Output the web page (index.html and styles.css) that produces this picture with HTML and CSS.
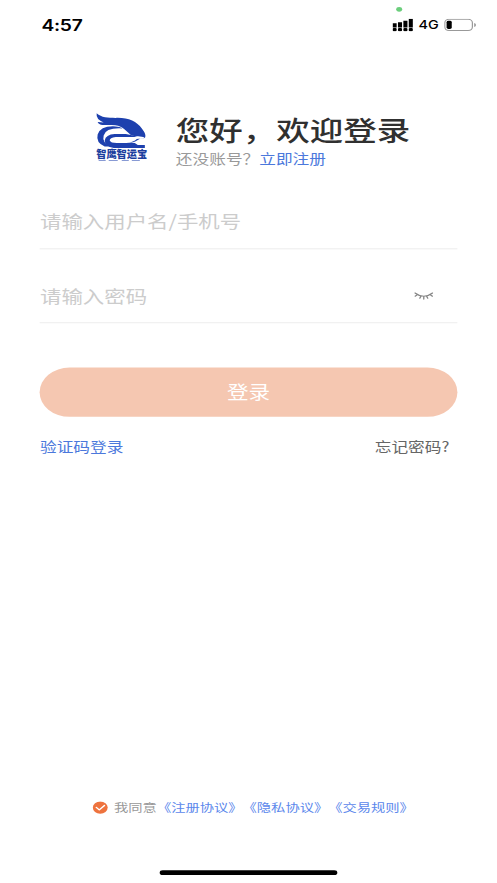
FILE: index.html
```html
<!DOCTYPE html>
<html lang="zh-CN">
<head>
<meta charset="utf-8">
<title>登录</title>
<link rel="stylesheet" href="styles.css">
</head>
<body>
<div class="screen">
  <header class="status">
    <span class="time">4:57</span>
    <div class="indicators">
      <i class="privacy-dot"></i>
      <svg class="signal" width="17" height="13" viewBox="0 0 17 13">
        <path d="M0 4.500h3.400v4.300H0zM4.500 3.500h3.400v5.300H4.500zM9 2h3.400v6.800H9zM13.500 0h3.400v8.800h-3.400z"/>
        <rect x="0" y="9.500" width="3.400" height="3.300" rx="1"/><rect x="4.500" y="9.500" width="3.400" height="3.300" rx="1"/><rect x="9" y="9.500" width="3.400" height="3.300" rx="1"/><rect x="13.500" y="9.500" width="3.400" height="3.300" rx="1"/>
      </svg>
      <span class="network">4G</span>
      <svg class="battery" width="27" height="13" viewBox="0 0 27 13">
        <rect x=".5" y=".5" width="23" height="11.500" rx="3.500" fill="none" stroke="#999"/>
        <rect x="2" y="2" width="4.300" height="8.500" rx="1.500"/>
        <path d="M25 4.300q1.500.500 1.500 2t-1.500 2z" fill="#999"/>
      </svg>
    </div>
  </header>

  <section class="intro">
    <svg class="logo" width="46" height="51" viewBox="0 0 55 50" preserveAspectRatio="none">
      <g fill="#1d40ae">
        <path d="M3 1C8 5.500 14 5.500 22 5.500C34 5 43 9 48 16C51 20 52.500 23 51 25.500C47 22.500 42 25 37 22.500C31 17 28 12.500 18 12.500H9Q5 12 4 9.500L10 10Q2 7 3 1Z"/>
        <path d="M29 16Q12 15 10 23Q8 30 17 34H11Q2 30 4 22Q7 13 22 14Q26 14 29 16Z"/>
        <path d="M51 25.500Q47 25 44 27.500Q40 30.500 34 30.500H41L44 32.500H51V35.500H20Q11 34 11 28Q12 22 21 21.500H32L37 22.500L44 24.500H22Q16 25 16 28Q17 30.500 23 30.500H33Q40 29.500 43 26.500Z"/>
        <path opacity=".7" d="M5 47.500h7v.700H5zM15 47.500h9v.700h-9zM28 47.500h7v.700h-7zM38 47.500h8v.700h-8z"/>
      </g>
      <text class="logo-name" x="2.500" y="45.600" textLength="51" lengthAdjust="spacingAndGlyphs">智鹰智运宝</text>
    </svg>
    <div class="greeting">
      <h1>您好，欢迎登录</h1>
      <p>还没账号？<a>立即注册</a></p>
    </div>
  </section>

  <main class="form">
    <div class="field">请输入用户名/手机号</div>
    <div class="field password">请输入密码
      <svg class="eye" width="16" height="9" viewBox="0 0 16 9" fill="none" stroke="#858585" stroke-width="1.100" stroke-linecap="round">
        <path d="M.700 1.300Q8 8 15.300 1.300M2.800 3L.800 4.600M5.600 4.600L4.700 6.700M8 5V7.500M10.400 4.600L11.300 6.700M13.200 3L15.200 4.600"/>
      </svg>
    </div>
    <div class="submit">登录</div>
    <div class="links"><a>验证码登录</a><span>忘记密码?</span></div>
  </main>

  <footer class="agreement">
    <svg width="13" height="13" viewBox="0 0 13 13"><circle cx="6.500" cy="6.500" r="6.200" fill="#ee733e"/><path d="M3.200 6.300L5.700 8.800L10 4.400" fill="none" stroke="#fff" stroke-width="1.300" stroke-linecap="round" stroke-linejoin="round"/></svg>
    <p>我同意<a>《注册协议》</a><a>《隐私协议》</a><a>《交易规则》</a></p>
  </footer>
  <div class="home-bar"></div>
</div>
</body>
</html>
```
FILE: styles.css
```css
* { box-sizing: border-box; }
html, body { margin: 0; height: 100%; overflow: hidden; background: #fff; }
h1, p { margin: 0; }
a { color: #4b78dc; }

.screen {
  display: flex;
  flex-direction: column;
  width: 414px;
  height: 896px;
  transform: scale(1.2005, .9855);
  transform-origin: 0 0;
  font-family: "Noto Sans CJK SC", sans-serif;
  text-spacing-trim: space-all;
}

.status {
  display: flex;
  justify-content: space-between;
  align-items: center;
  height: 50px;
  padding: 0 17px 0 34.500px;
}
.time { font: 600 16px/20px Inter, sans-serif; letter-spacing: -.2px; }
.indicators { position: relative; display: flex; align-items: center; }
.privacy-dot {
  position: absolute;
  left: 3px;
  top: -10.500px;
  width: 5px;
  height: 5px;
  border-radius: 50%;
  background: #6bce7c;
}
.network { margin: 0 5px; font: 500 12px/16px Inter, sans-serif; }
.battery { margin-left: -.5px; }

.intro { display: flex; height: 130px; padding: 64px 0 0 78px; }
.logo { flex: none; overflow: visible; }
.logo-name { font: 900 10.500px "Noto Sans CJK SC", sans-serif; fill: #1d3f9e; }
.greeting { margin: -1px 0 0 22.500px; }
h1 { font-size: 27.900px; line-height: 37px; font-weight: 500; color: #303030; white-space: nowrap; }
.greeting p { font-size: 13.900px; line-height: 20px; color: #999; }

.form { width: 347.500px; margin-left: 33.300px; }
.field {
  display: flex;
  align-items: center;
  justify-content: space-between;
  height: 72.500px;
  padding-top: 15px;
  border-bottom: 1px solid #ececec;
  font-size: 17.850px;
  color: #ccc;
}
.password { height: 75px; padding-right: 20px; padding-top: 18.500px; }
.eye { margin-top: 3px; }
.submit {
  height: 50px;
  margin-top: 45.500px;
  border-radius: 25px;
  background: #f5c7b1;
  color: #fff;
  font-size: 18px;
  line-height: 49px;
  text-align: center;
}
.links {
  display: flex;
  justify-content: space-between;
  padding: 19.500px 6.500px 0 0;
  font-size: 13.900px;
  line-height: 20px;
  color: #666;
}

.agreement {
  display: flex;
  align-items: center;
  margin: auto 0 53.500px 76.500px;
  height: 20px;
  font-size: 11.900px;
  color: #999;
}
.agreement p { margin: -2px 0 0 5.500px; white-space: nowrap; }
.agreement a { color: #5c88ec; }
.home-bar {
  flex: none;
  width: 147.500px;
  height: 5px;
  margin: 0 0 8px 133.300px;
  border-radius: 3px;
  background: #000;
}
```
